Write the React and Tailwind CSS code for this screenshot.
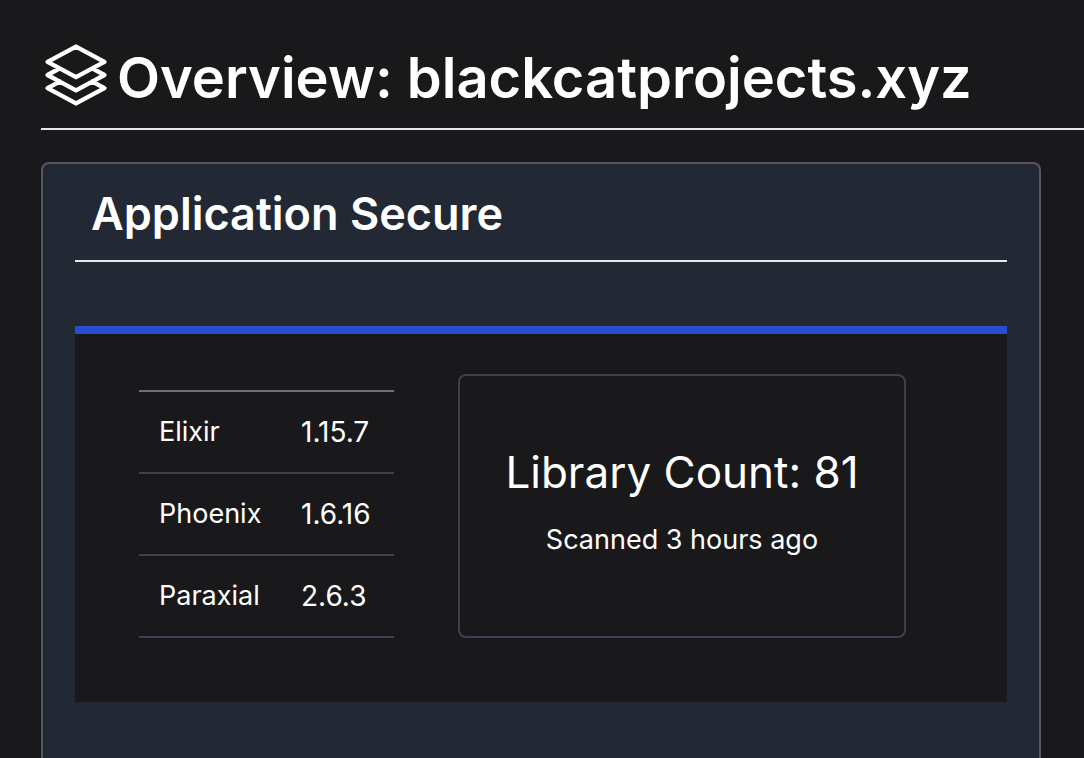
import React from 'react';

const versions = [
    { name: 'Elixir', version: '1.15.7' },
    { name: 'Phoenix', version: '1.6.16' },
    { name: 'Paraxial', version: '2.6.3' },
];

function StackIcon({ className }) {
    return (
        <svg
            className={className}
            viewBox="0 0 24 24"
            fill="none"
            stroke="currentColor"
            strokeWidth="1.5"
            strokeLinecap="round"
            strokeLinejoin="round"
            aria-hidden="true"
        >
            <path d="M6.429 9.75 2.25 12l4.179 2.25m0-4.5 5.571 3 5.571-3m-11.142 0L2.25 7.5 12 2.25l9.75 5.25-4.179 2.25m0 0L21.75 12l-4.179 2.25m0 0 4.179 2.25L12 21.75 2.25 16.5l4.179-2.25m11.142 0-5.571 3-5.571-3" />
        </svg>
    );
}

function VersionTable() {
    return (
        <table className="w-[255px] table-fixed border-collapse text-left leading-10">
            <tbody className="border-t-2 border-[#6b7080]">
                {versions.map((row) => (
                    <tr key={row.name} className="border-b-2 border-[#394250]">
                        <th scope="row" className="w-[162px] py-5 pl-5 text-[27px] font-normal">{row.name}</th>
                        <td className="py-5 text-[28px]">{row.version}</td>
                    </tr>
                ))}
            </tbody>
        </table>
    );
}

function LibraryCard() {
    return (
        <div className="flex w-[448px] flex-col items-center gap-4 rounded-lg border-2 border-[#394250] pt-16 pb-19">
            <p className="text-[44px] leading-16">Library Count: 81</p>
            <p className="text-[27px] leading-10">Scanned 3 hours ago</p>
        </div>
    );
}

export default function App() {
    return (
        <div className="flex min-h-screen flex-col overflow-hidden bg-[#19191b] pl-[41px] pt-10 font-['Inter',sans-serif] text-white">
            {/* Page title */}
            <header className="flex items-start gap-1.5 border-b-2 border-[#e5e7eb] pb-3">
                <StackIcon className="size-[70px] shrink-0" />
                <h1 className="whitespace-nowrap text-[56px] leading-19 font-semibold">Overview: blackcatprojects.xyz</h1>
            </header>

            {/* Status card, runs to the bottom of the window */}
            <main className="mt-8 mr-[43px] flex-1 rounded-t-lg border-2 border-b-0 border-[#56575f] bg-[#222935] px-8 pb-14">
                <h2 className="border-b-2 border-[#e5e7eb] px-4 pt-4 pb-3 text-[45px] leading-17 font-semibold">Application Secure</h2>

                <section className="mt-16 flex items-start gap-16 border-t-8 border-[#294dd0] bg-[#19191b] px-16 pt-10 pb-16">
                    <div className="mt-4">
                        <VersionTable />
                    </div>
                    <LibraryCard />
                </section>
            </main>
        </div>
    );
}
